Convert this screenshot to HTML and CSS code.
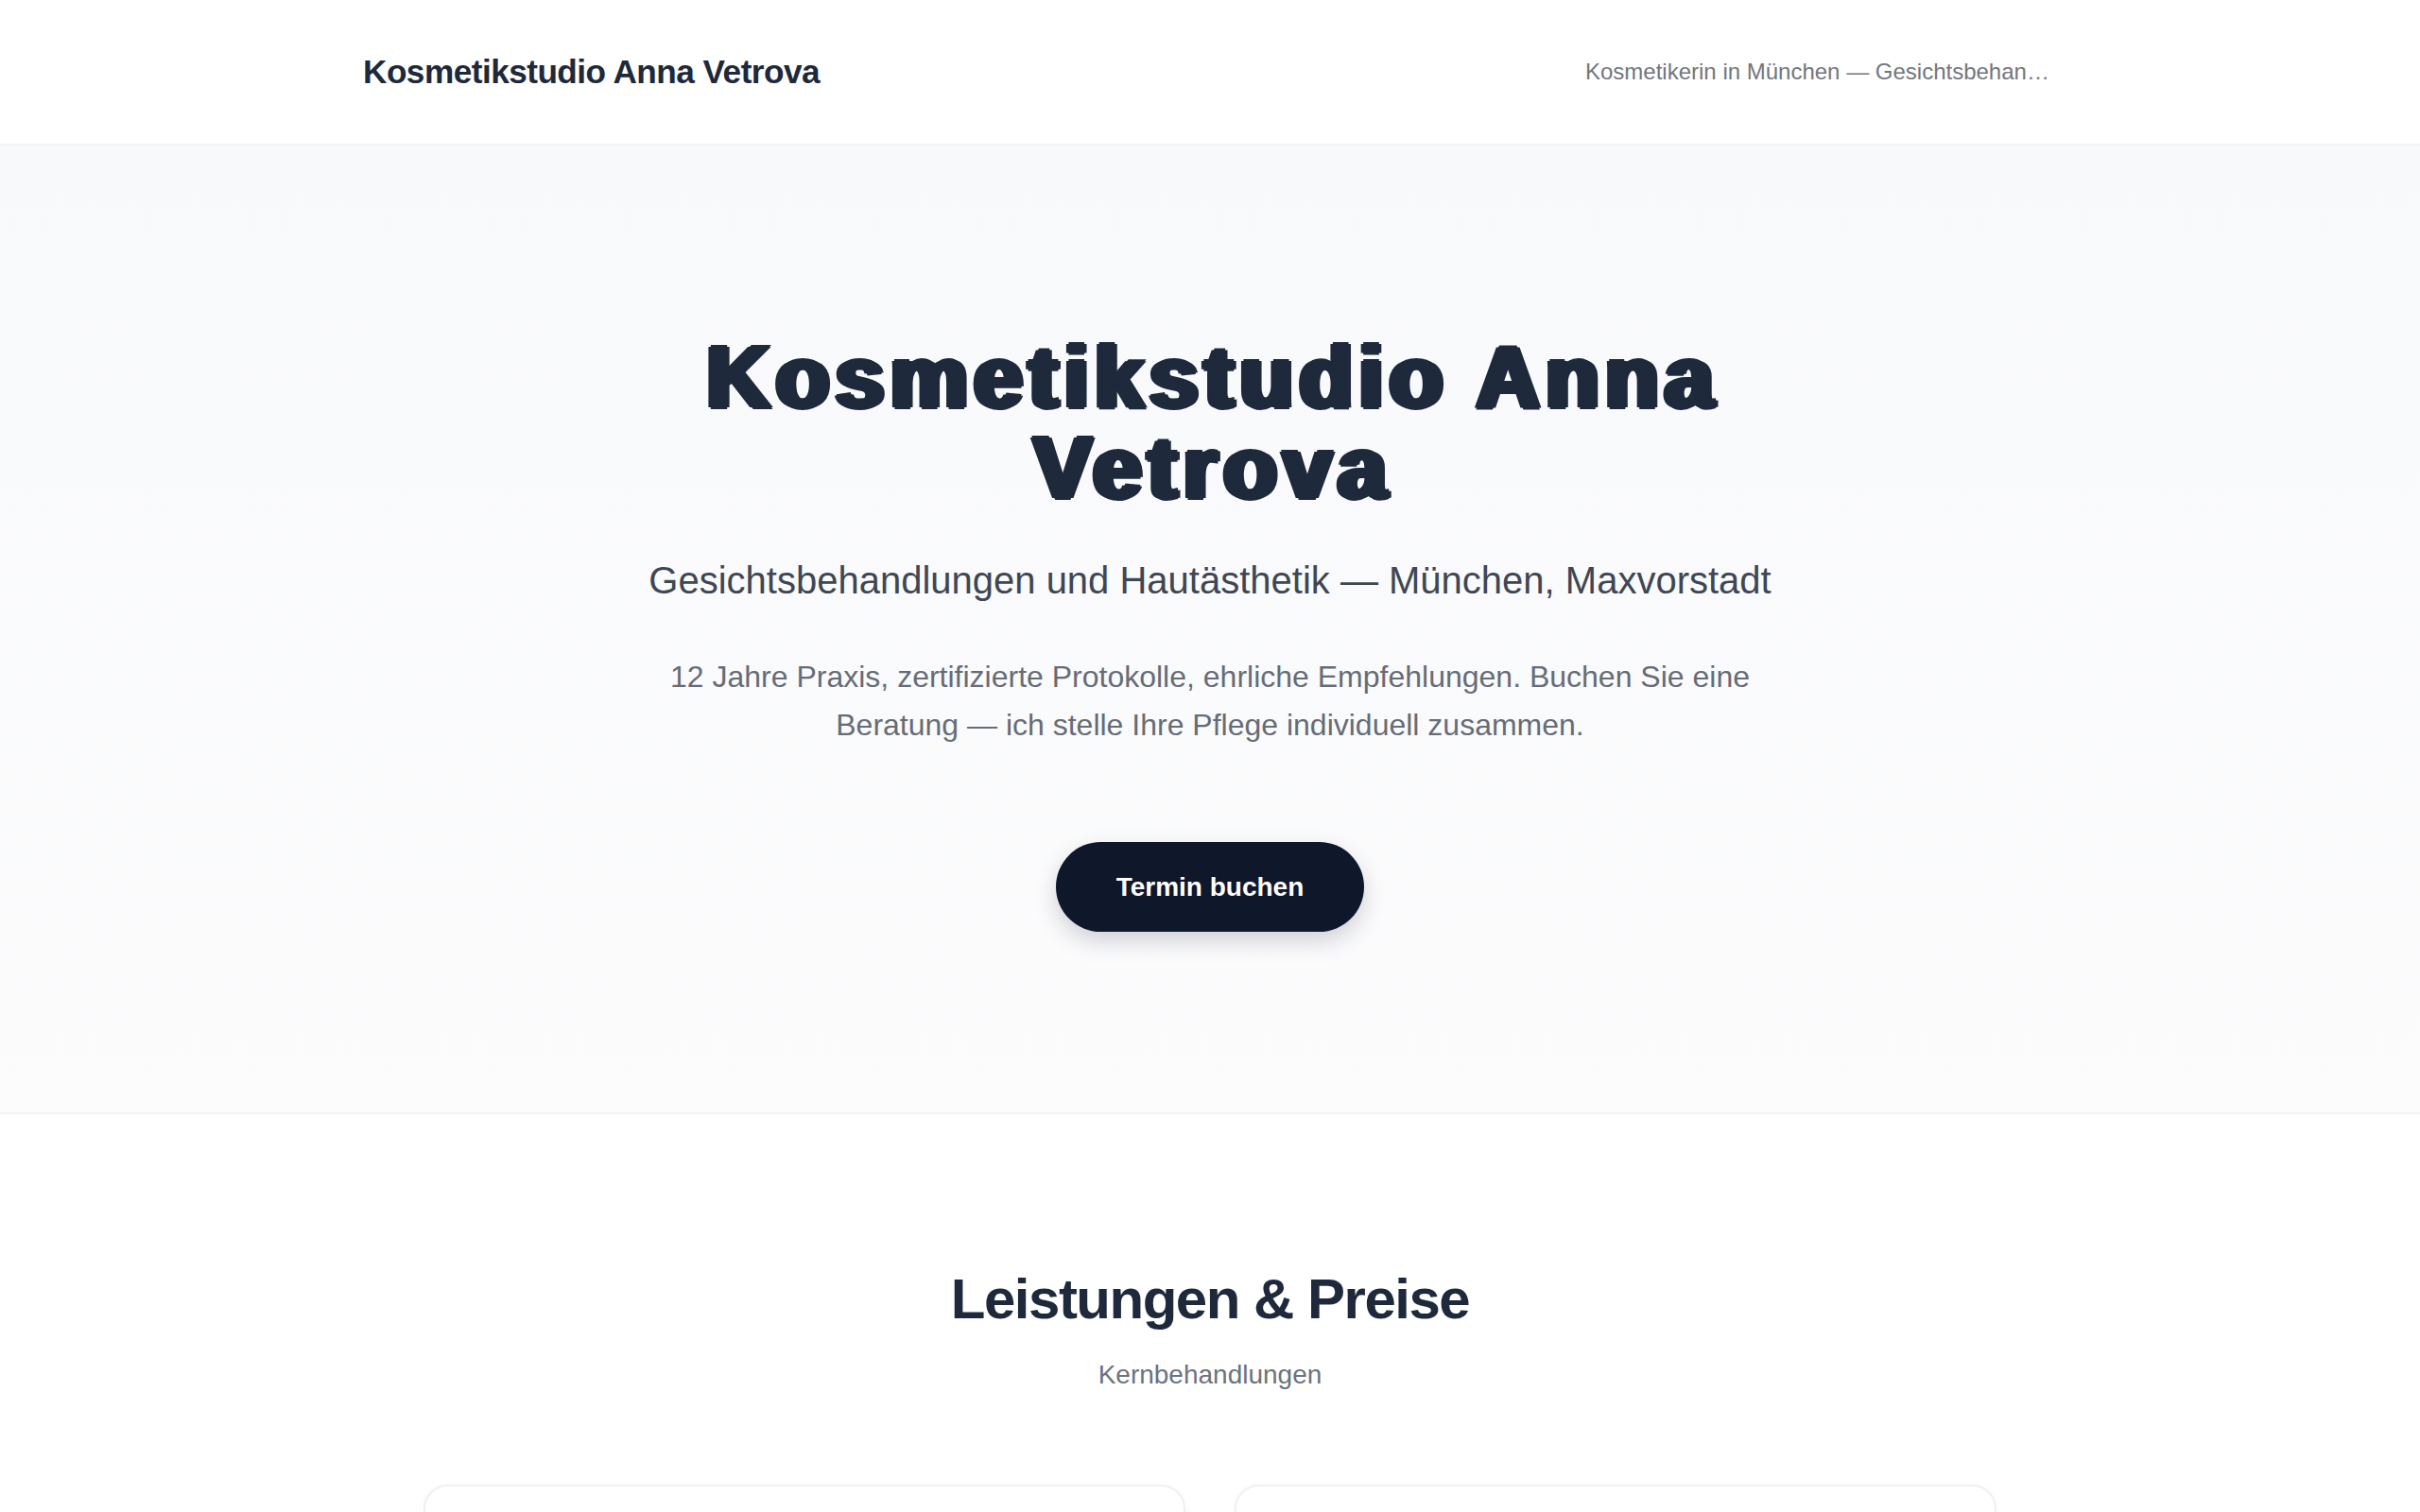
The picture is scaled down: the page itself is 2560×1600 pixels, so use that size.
FILE: index.html
```html
<!DOCTYPE html>
<html lang="de">
<head>
<meta charset="utf-8">
<title>Kosmetikstudio Anna Vetrova</title>
<link rel="stylesheet" href="styles.css">
</head>
<body>
<header class="site-header">
  <div class="header-inner">
    <a class="logo" href="#">Kosmetikstudio Anna Vetrova</a>
    <p class="tagline">Kosmetikerin in München — Gesichtsbehandlungen und Hautästhetik in der Maxvorstadt</p>
  </div>
</header>
<main>
  <section class="hero">
    <h1 class="hero-title">Kosmetikstudio Anna Vetrova</h1>
    <p class="hero-sub">Gesichtsbehandlungen und Hautästhetik — München, Maxvorstadt</p>
    <p class="hero-text">12 Jahre Praxis, zertifizierte Protokolle, ehrliche Empfehlungen. Buchen Sie eine Beratung — ich stelle Ihre Pflege individuell zusammen.</p>
    <a class="btn" href="#">Termin buchen</a>
  </section>
  <section class="services">
    <h2 class="section-title">Leistungen &amp; Preise</h2>
    <p class="section-sub">Kernbehandlungen</p>
    <div class="cards">
      <article class="card">
        <h3 class="card-title">Klassische Gesichtsbehandlung</h3>
        <p class="card-text">Reinigung, Peeling, Ausreinigung, Maske und Pflege — 75 Minuten.</p>
        <p class="card-price">ab 89 €</p>
      </article>
      <article class="card">
        <h3 class="card-title">Hydra-Facial &amp; Feuchtigkeit</h3>
        <p class="card-text">Tiefenreinigung und intensive Feuchtigkeitspflege — 60 Minuten.</p>
        <p class="card-price">ab 119 €</p>
      </article>
    </div>
  </section>
</main>
</body>
</html>
```

FILE: styles.css
```css
* { box-sizing: border-box; }

html, body {
  margin: 0;
  padding: 0;
  background: #ffffff;
}

body {
  font-family: "Liberation Sans", Arial, sans-serif;
  color: #1e293b;
}

.site-header {
  height: 154px;
  border-bottom: 2px solid #f1f3f6;
  background: #ffffff;
}

.header-inner {
  max-width: 1792px;
  height: 100%;
  margin: 0 auto;
  display: flex;
  align-items: center;
  justify-content: space-between;
}

.logo {
  font-size: 35.2px;
  font-weight: 700;
  letter-spacing: -0.015em;
  color: #1e293b;
  text-decoration: none;
}

.tagline {
  margin: 0;
  max-width: 499px;
  font-size: 24px;
  color: #72767e;
  white-space: nowrap;
  overflow: hidden;
  text-overflow: ellipsis;
}

.hero {
  display: flex;
  flex-direction: column;
  align-items: center;
  text-align: center;
  padding: 197px 40px 191px;
  background: linear-gradient(180deg, #f8f9fb 0%, #fcfcfd 100%);
  border-bottom: 2px solid #f1f2f4;
}

.hero-title {
  margin: 0;
  max-width: 1240px;
  padding-left: 7px;
  font-family: "Liberation Sans", Arial, sans-serif;
  font-size: 92px;
  line-height: 96px;
  font-weight: 700;
  letter-spacing: 6.8px;
  color: #1e293b;
  -webkit-text-stroke: 4px #1e293b;
  text-shadow: 4.5px 0 0 #1e293b, -4.5px 0 0 #1e293b, 2.5px 0 0 #1e293b, -2.5px 0 0 #1e293b;
}

.hero-sub {
  margin: 43px 0 0;
  font-size: 40px;
  line-height: 56px;
  color: #3f4654;
}

.hero-text {
  margin: 49px 0 0;
  max-width: 1152px;
  font-size: 32px;
  line-height: 51.2px;
  color: #666c77;
}

.btn {
  margin-top: 98px;
  display: inline-block;
  padding: 29px 64px;
  line-height: 37px;
  font-size: 28px;
  font-weight: 700;
  color: #ffffff;
  background: #0f172a;
  border-radius: 999px;
  text-decoration: none;
  box-shadow: 0 10px 24px rgba(15, 23, 42, 0.18);
}

.services {
  padding: 160px 0 120px;
  text-align: center;
}

.section-title {
  margin: 0;
  font-size: 60px;
  line-height: 72px;
  font-weight: 700;
  letter-spacing: -0.025em;
  color: #1e293b;
}

.section-sub {
  margin: 23px 0 0;
  font-size: 28px;
  line-height: 42px;
  color: #6b7280;
}

.cards {
  max-width: 1664px;
  margin: 95px auto 0;
  display: grid;
  grid-template-columns: 1fr 1fr;
  gap: 52px;
  text-align: left;
}

.card {
  background: #ffffff;
  border: 2px solid #eef0f3;
  border-radius: 25.6px;
  padding: 52px;
  box-shadow: 0 2px 10px rgba(15, 23, 42, 0.03);
}

.card-title {
  margin: 0;
  font-size: 35px;
  font-weight: 700;
  color: #1e293b;
}

.card-text {
  margin: 20px 0 0;
  font-size: 27px;
  line-height: 1.6;
  color: #6b7280;
}

.card-price {
  margin: 24px 0 0;
  font-size: 32px;
  font-weight: 700;
  color: #0f172a;
}
```
